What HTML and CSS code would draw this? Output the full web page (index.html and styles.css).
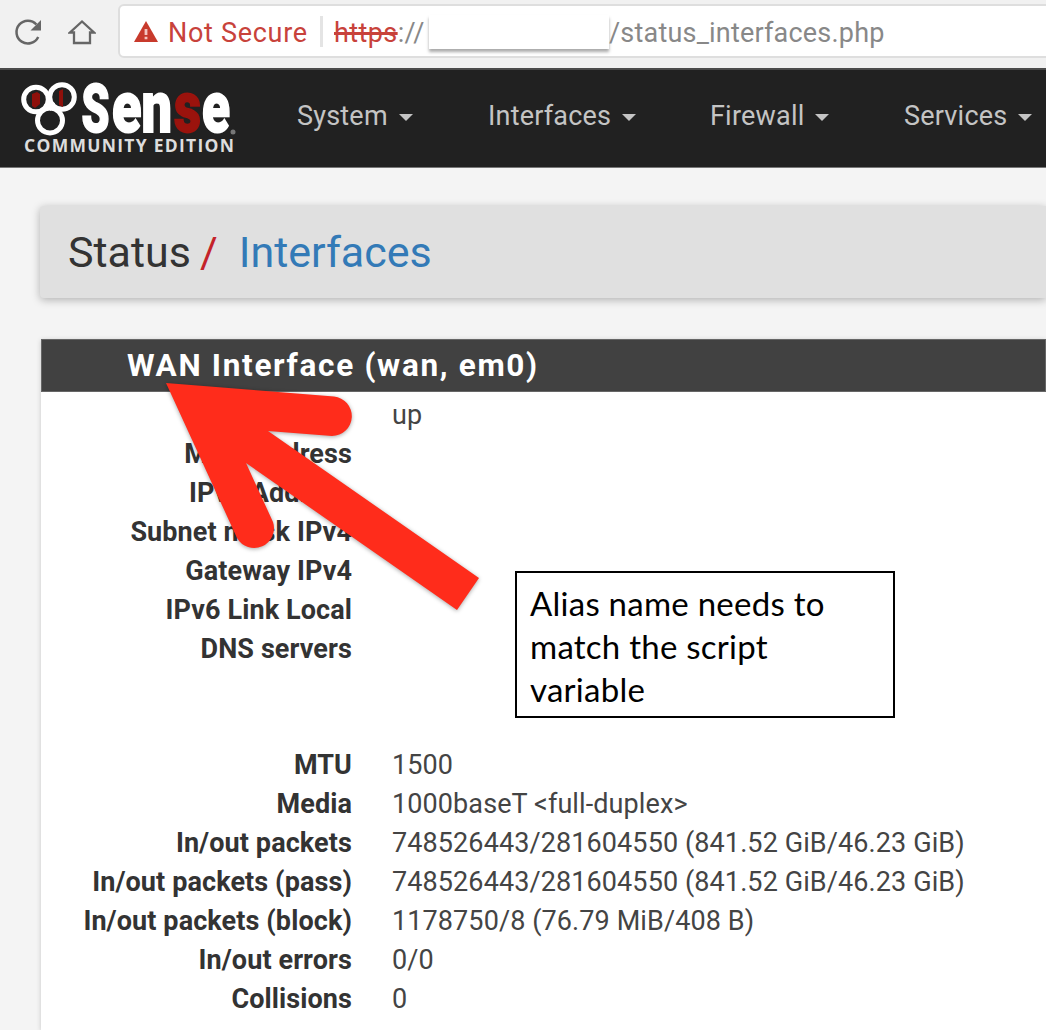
FILE: index.html
```html
<!DOCTYPE html>
<html lang="en">
<head>
<meta charset="utf-8">
<title>Status: Interfaces</title>
<link rel="stylesheet" href="styles.css">
</head>
<body>
<header class="browser">
  <svg class="reload" width="30" height="30" viewBox="0 0 30 30"><path d="M25.2 20A11.4 11.4 0 1 1 23.4 7.500" fill="none" stroke="#666" stroke-width="2.500"/><path d="M28 3V13.500H17.500Z" fill="#666"/></svg>
  <svg class="home" width="28" height="28" viewBox="0 0 28 28"><path d="M2 14.500H6V25H22V14.500H26L14 3.500Z" fill="none" stroke="#666" stroke-width="2.300"/></svg>
  <div class="address">
    <svg class="warning" width="24" height="21" viewBox="0 0 24 21"><path d="M12 0 24 21H0Z" fill="#c83a2c"/><path d="M10.600 8h2.800v6h-2.800zM10.600 15.700h2.800v2.600h-2.800z" fill="#f3c5c0"/></svg>
    <span class="insecure">Not Secure</span>
    <i class="divider"></i>
    <span class="scheme"><s>https</s>://</span>
    <span class="redacted"></span>
    <span class="path">/status_interfaces.php</span>
  </div>
</header>
<nav class="navbar">
  <svg class="logo" width="222" height="80" viewBox="0 0 222 80">
    <g fill="none" stroke="#fff" stroke-width="5">
      <circle cx="16" cy="20.500" r="12.300"/><circle cx="42" cy="18" r="12.300"/><circle cx="30" cy="41.500" r="12.500"/>
      <path d="M26 24l4 4 3-5"/>
    </g>
    <path d="M12 15l5-2 3 2v10l-5 4-3-2zM39 12l4-2v18l-4-2z" fill="#8f100b"/>
    <g class="word">
      <text class="cap" x="61.500" y="52.500" textLength="28" lengthAdjust="spacingAndGlyphs">S</text>
      <text x="92" y="52.500" textLength="60" lengthAdjust="spacingAndGlyphs">en</text>
      <text class="red" x="154" y="52.500" textLength="27" lengthAdjust="spacingAndGlyphs">s</text>
      <text x="182" y="52.500" textLength="28" lengthAdjust="spacingAndGlyphs">e</text>
    </g>
    <circle cx="213" cy="53" r="2.500" fill="#777"/>
    <text class="edition" x="4" y="72.500" textLength="210">COMMUNITY EDITION</text>
  </svg>
  <a class="item system">System<i class="caret"></i></a>
  <a class="item interfaces">Interfaces<i class="caret"></i></a>
  <a class="item firewall">Firewall<i class="caret"></i></a>
  <a class="item services">Services<i class="caret"></i></a>
</nav>
<main class="page">
  <h1 class="crumbs"><span>Status</span><b>/</b><a>Interfaces</a></h1>
  <section class="panel">
    <h2>WAN Interface (wan, em0)</h2>
    <dl>
      <dt></dt><dd>up</dd>
      <dt>MAC Address</dt><dd></dd>
      <dt>IPv4 Address</dt><dd></dd>
      <dt>Subnet mask IPv4</dt><dd></dd>
      <dt>Gateway IPv4</dt><dd></dd>
      <dt>IPv6 Link Local</dt><dd></dd>
      <dt class="servers">DNS servers</dt><dd class="servers"></dd>
      <dt>MTU</dt><dd>1500</dd>
      <dt>Media</dt><dd>1000baseT &lt;full-duplex&gt;</dd>
      <dt>In/out packets</dt><dd>748526443/281604550 (841.52 GiB/46.23 GiB)</dd>
      <dt>In/out packets (pass)</dt><dd>748526443/281604550 (841.52 GiB/46.23 GiB)</dd>
      <dt>In/out packets (block)</dt><dd>1178750/8 (76.79 MiB/408 B)</dd>
      <dt>In/out errors</dt><dd>0/0</dd>
      <dt>Collisions</dt><dd>0</dd>
    </dl>
  </section>
</main>
<svg class="arrow" width="340" height="250" viewBox="0 0 340 250"><path d="M16 13 184 26.500A19.800 19.800 0 0 1 182 66L118 61 329 208 307 240 96 93 123 152A19.800 19.800 0 0 1 87 168Z" fill="#ff2c1b"/></svg>
<aside class="note">Alias name needs to<br>match the script<br>variable</aside>
</body>
</html>
```

FILE: styles.css
```css
* { box-sizing: border-box; }
body {
  position: relative;
  width: 1046px;
  height: 1030px;
  margin: 0;
  overflow: hidden;
  background: #f4f4f4;
  color: #333;
  font-family: Roboto, sans-serif;
  white-space: nowrap;
}
.browser {
  display: flex;
  height: 68px;
  padding-top: 4px;
  background: #f1f1f1;
}
.reload { flex: none; margin: 13px 0 0 13px; }
.home { flex: none; margin: 14px 0 0 25px; }
.address {
  display: flex;
  flex: none;
  align-items: center;
  width: 940px;
  height: 54px;
  margin-left: 22px;
  padding-left: 14px;
  border: 2px solid #dedede;
  border-radius: 6px;
  background: #fff;
  font-size: 27px;
}
.warning { flex: none; margin-top: 1px; }
.insecure { width: 141px; margin-left: 10px; padding-top: 4px; color: #c8423b; letter-spacing: .7px; }
.divider { width: 3px; height: 31px; margin-left: 11px; background: #e4e4e4; }
.scheme { width: 95px; margin-left: 11px; padding-top: 4px; color: #888; letter-spacing: .4px; }
.scheme s { color: #c8423b; text-decoration-thickness: 2.5px; }
.redacted {
  width: 180px;
  height: 34px;
  margin-top: 2px;
  background: #fff;
  box-shadow: 0 3px 3px #aaa;
}
.path { padding-top: 4px; color: #888; letter-spacing: .2px; }
.navbar {
  display: flex;
  height: 100px;
  border-top: 2px solid #4b4b4b;
  border-bottom: 1px solid #777;
  background: #212121;
  color: #c4c4c4;
  font-size: 27px;
}
.logo { flex: none; margin: 9px 0 0 20px; }
.word { fill: #fff; stroke: #fff; stroke-width: 1.800px; font-size: 72px; font-weight: 900; }
.word .cap { font-size: 66px; }
.word .red { fill: #9b130d; stroke: #9b130d; }
.edition { fill: #ddd; font: 700 17.500px "Open Sans", sans-serif; }
.item {
  display: flex;
  align-items: center;
  height: 92px;
  letter-spacing: .2px;
}
.system { width: 191px; margin-left: 55px; }
.interfaces { width: 222px; }
.firewall { width: 194px; }
.caret {
  margin: 3px 0 0 11px;
  border: 7px solid transparent;
  border-top-color: #c4c4c4;
  border-bottom: 0;
}
.page { height: 862px; overflow: hidden; padding: 38px 0 0 40px; }
.crumbs {
  display: flex;
  align-items: center;
  height: 92px;
  margin: 0;
  padding: 0 0 0 28px;
  border-radius: 4px 0 0 4px;
  background: #e0e0e0;
  box-shadow: 0 2px 9px rgba(0,0,0,.28);
  font-size: 43px;
  font-weight: 400;
}
.crumbs b { margin: 0 21px 0 9px; color: #c4232a; font-weight: 400; }
.crumbs a { color: #337ab7; }
.panel {
  height: 691px;
  margin: 41px 0 0 1px;
  background: #fff;
  box-shadow: 0 1px 5px rgba(0,0,0,.18);
}
.panel h2 {
  height: 53px;
  margin: 0;
  padding-left: 85px;
  border: 1px solid #666;
  background: #414141;
  color: #fff;
  font-size: 31.500px;
  font-weight: 700;
  line-height: 52px;
  letter-spacing: 1.680px;
}
dl {
  display: grid;
  grid-template-columns: 311px 1fr;
  grid-auto-rows: 38.950px;
  column-gap: 40px;
  margin: 0;
  padding-top: 3px;
  font-size: 27px;
  line-height: 40px;
  letter-spacing: .1px;
}
dt { text-align: right; font-weight: 700; }
dd { margin: 0; color: #444; }
.servers { height: 116.850px; grid-row-end: span 3; }
.arrow {
  position: absolute;
  top: 370px;
  left: 150px;
  filter: drop-shadow(0 1px 2px rgba(0,0,0,.35));
}
.note {
  position: absolute;
  top: 571px;
  left: 515px;
  width: 380px;
  height: 147px;
  padding: 9px 13px;
  border: 2px solid #000;
  background: #fff;
  color: #000;
  font: 33px/43px Lato, sans-serif;
  letter-spacing: .25px;
}
```
